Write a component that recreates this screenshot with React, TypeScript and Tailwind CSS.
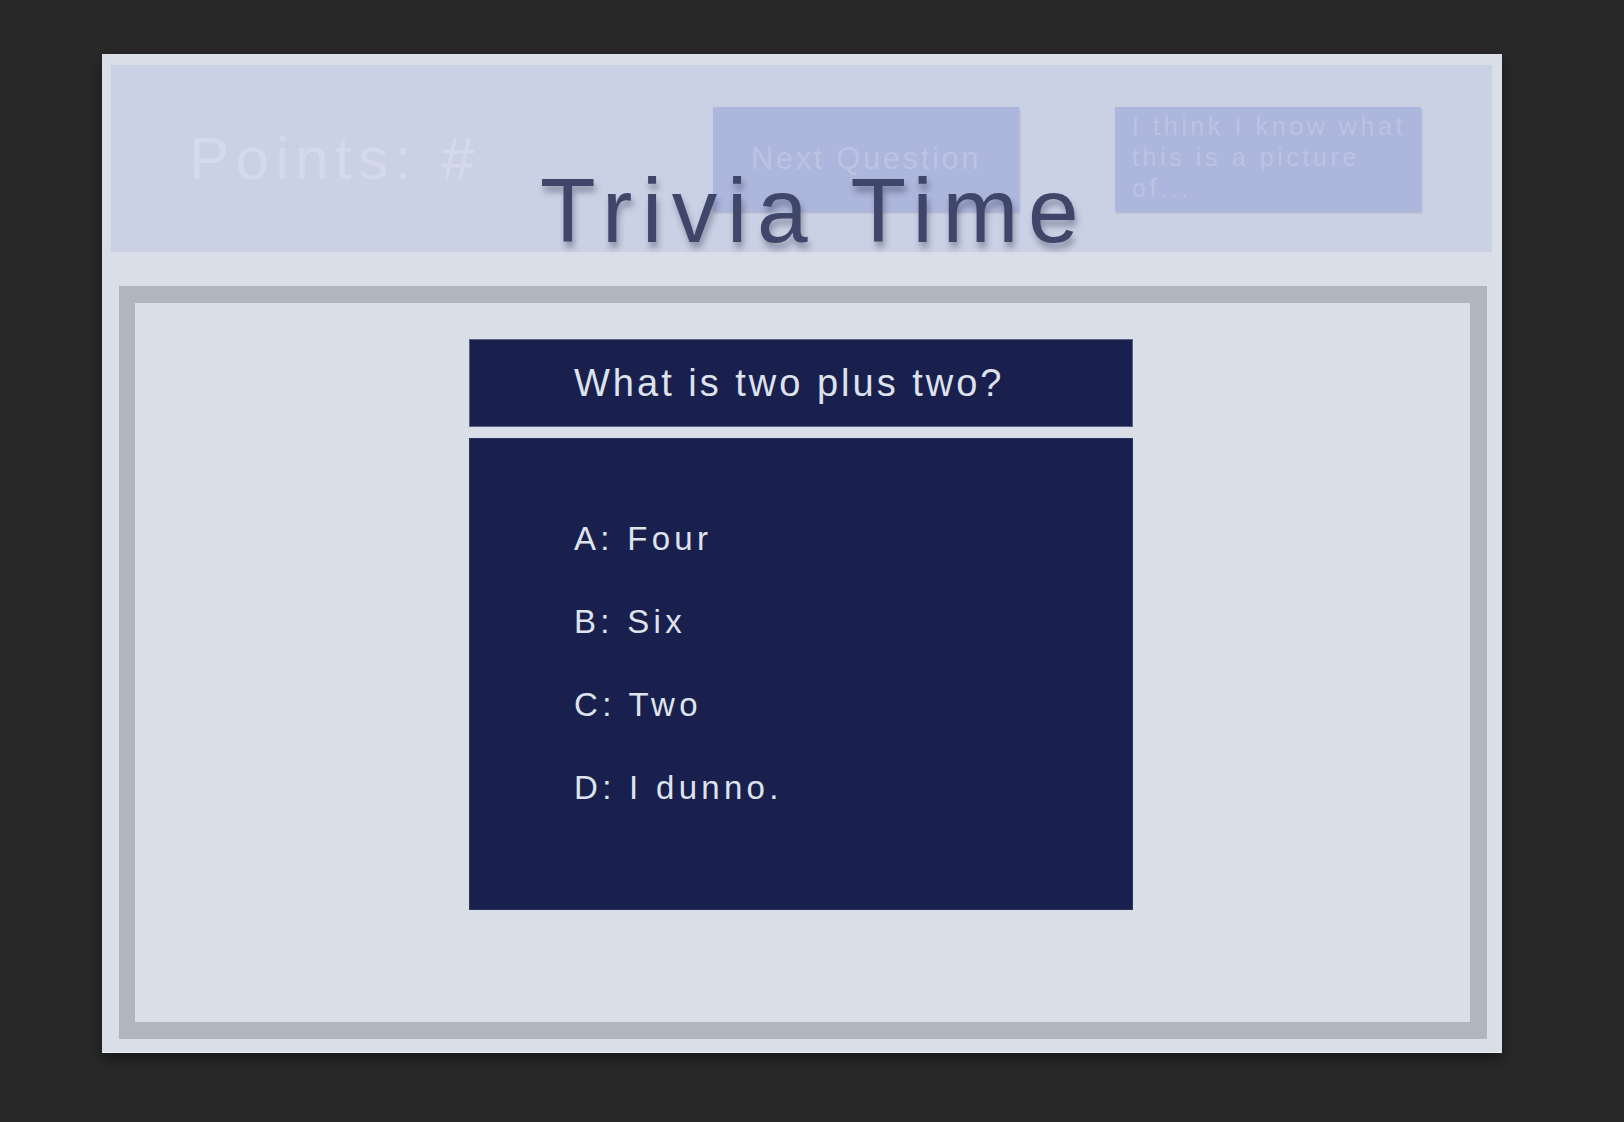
const font = { fontFamily: '"Liberation Sans", Arial, Helvetica, sans-serif' };

const answers = ["A: Four", "B: Six", "C: Two", "D: I dunno."];

function HeaderButton({ children, className = "" }: { children: React.ReactNode; className?: string }) {
  return (
    <div
      className={`h-[104px] w-[306px] shrink-0 bg-[#adb6dc] shadow-[1px_2px_2px_rgba(40,50,90,0.18)] ${className}`}
    >
      {children}
    </div>
  );
}

export default function App() {
  return (
    <div className="min-h-[1122px] w-full bg-[#292929] pl-[102px] pt-[54px]" style={font}>
      <div className="relative flex h-[999px] w-[1400px] flex-col border-b border-[#eceff4] bg-[#dadfe7] shadow-[0_6px_14px_rgba(0,0,0,0.45)]">
        {/* top bar */}
        <header className="ml-[9px] mr-[10px] mt-[11px] flex h-[187px] items-center bg-[#cbd1e5] pl-[78px]">
          <span className="w-[524px] shrink-0 text-[60px] leading-none tracking-[6.5px] text-[#d4d9eb]">
            Points: #
          </span>
          <HeaderButton className="flex items-center justify-center">
            <span className="text-[31px] leading-none tracking-[2.6px] text-[#bcc3e3]">Next Question</span>
          </HeaderButton>
          <HeaderButton className="ml-[96px] pl-[17px] pt-[4px]">
            <p className="text-[25px] leading-[31px] tracking-[3.6px] text-[#bcc3e3]">
              I think I know what
              <br />
              this is a picture
              <br />
              of...
            </p>
          </HeaderButton>
        </header>

        {/* title sits over the header */}
        <h1 className="absolute left-[438px] top-[111px] whitespace-nowrap text-[91px] font-normal leading-none tracking-[9.7px] text-[#3f4669] [text-shadow:2px_6px_6px_rgba(20,25,50,0.35)]">
          Trivia Time
        </h1>

        {/* game frame */}
        <div className="ml-[17px] mr-[15px] mt-[34px] h-[753px] border-[17px] border-l-[16px] border-[#b0b5c0] bg-[#dadfe7] pt-[36px]">
          <div className="ml-[334px] w-[664px]">
            <div className="flex h-[88px] items-center border border-[#5b6386] bg-[#19204e] pl-[104px]">
              <span className="text-[38px] leading-none tracking-[3px] text-[#dde2ec]">What is two plus two?</span>
            </div>
            <div className="mt-[11px] h-[472px] border border-[#2a3260] bg-[#19204e] pl-[104px] pt-[58px]">
              {answers.map((a) => (
                <p key={a} className="text-[33px] leading-[83px] tracking-[4.3px] text-[#dfe3ec]">
                  {a}
                </p>
              ))}
            </div>
          </div>
        </div>
      </div>
    </div>
  );
}
